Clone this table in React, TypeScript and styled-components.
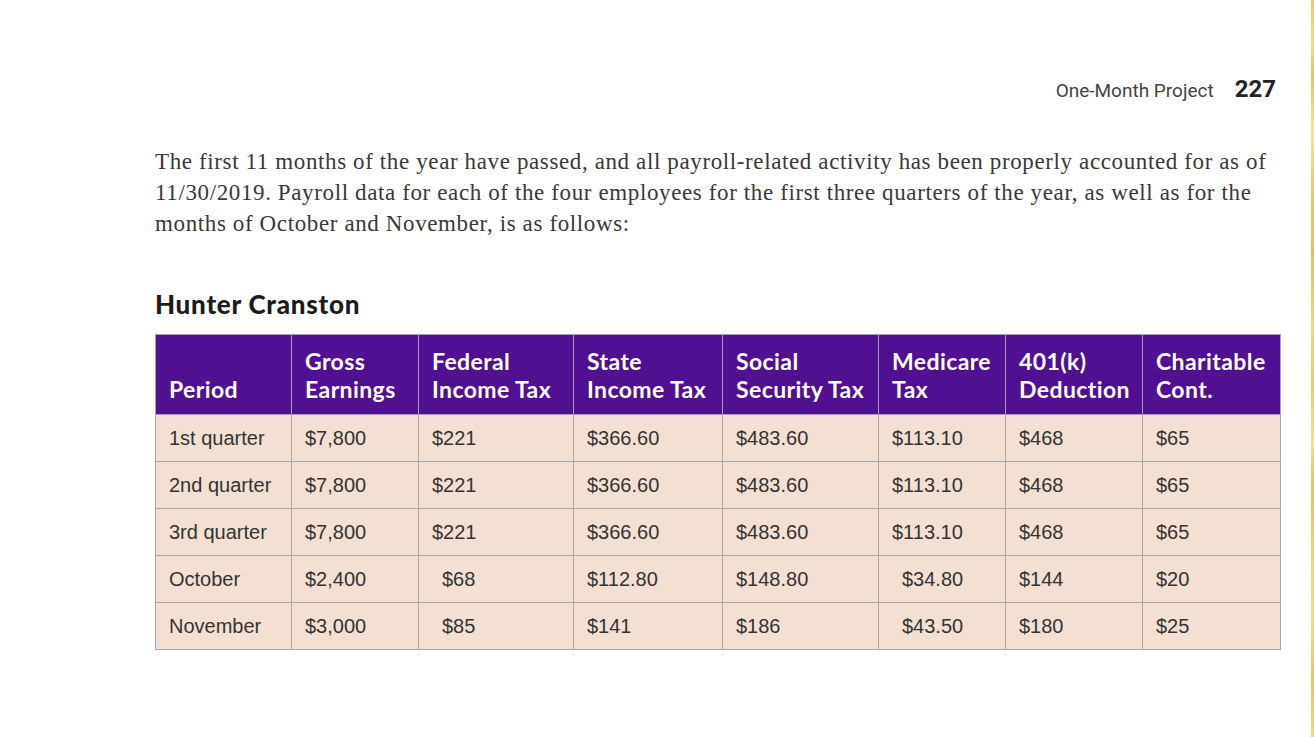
import styled, { createGlobalStyle } from "styled-components";

type Row = {
  period: string;
  values: string[];
  indent?: number[];
};

const columns = [
  { label: ["", "Period"], width: 136 },
  { label: ["Gross", "Earnings"], width: 127 },
  { label: ["Federal", "Income Tax"], width: 155 },
  { label: ["State", "Income Tax"], width: 149 },
  { label: ["Social", "Security Tax"], width: 156 },
  { label: ["Medicare", "Tax"], width: 127 },
  { label: ["401(k)", "Deduction"], width: 137 },
  { label: ["Charitable", "Cont."], width: 138 },
];

const rows: Row[] = [
  { period: "1st quarter", values: ["$7,800", "$221", "$366.60", "$483.60", "$113.10", "$468", "$65"] },
  { period: "2nd quarter", values: ["$7,800", "$221", "$366.60", "$483.60", "$113.10", "$468", "$65"] },
  { period: "3rd quarter", values: ["$7,800", "$221", "$366.60", "$483.60", "$113.10", "$468", "$65"] },
  { period: "October", values: ["$2,400", "$68", "$112.80", "$148.80", "$34.80", "$144", "$20"], indent: [1, 4] },
  { period: "November", values: ["$3,000", "$85", "$141", "$186", "$43.50", "$180", "$25"], indent: [1, 4] },
];

const GlobalStyle = createGlobalStyle`
  html, body {
    margin: 0;
    padding: 0;
    background: #ffffff;
  }
`;

const Page = styled.div`
  display: flex;
  min-height: 737px;
  background: #ffffff;
`;

const Main = styled.main`
  flex: 1;
  padding: 75px 30px 0 155px;
`;

const EdgeStrip = styled.div`
  width: 4px;
  background: linear-gradient(
    180deg,
    #f4cf3e 0%,
    #f8dc6c 6%,
    #f1c82e 10%,
    #fae28a 18%,
    #f3cd3c 26%,
    #eec232 34%,
    #f7d95e 44%,
    #f3cf44 52%,
    #f9e07c 60%,
    #efc534 66%,
    #f5d550 74%,
    #f8dc70 84%,
    #f1ca3a 92%,
    #f7d862 100%
  );
`;

const RunningHead = styled.div`
  display: flex;
  justify-content: flex-end;
  align-items: baseline;
  gap: 21px;
  padding-right: 5px;
  font-family: Roboto, "Liberation Sans", sans-serif;
`;

const HeadTitle = styled.span`
  font-size: 19px;
  color: #444444;
`;

const PageNumber = styled.span`
  font-size: 24px;
  font-weight: 700;
  color: #222222;
`;

const Intro = styled.p`
  margin: 43px 0 0;
  font-family: "Liberation Serif", serif;
  font-size: 23px;
  letter-spacing: 0.62px;
  line-height: 31px;
  color: #3a3836;
  white-space: nowrap;
`;

const Heading = styled.h2`
  margin: 50px 0 0;
  font-family: Lato, "Liberation Sans", sans-serif;
  font-weight: 900;
  font-size: 26px;
  letter-spacing: 0.75px;
  line-height: 30px;
  color: #1c1c1c;
`;

const Table = styled.table`
  margin-top: 15px;
  width: 1125px;
  border-collapse: collapse;
  table-layout: fixed;
  border: 1px solid #a8a8a8;
`;

const HeadCell = styled.th`
  height: 68px;
  padding: 0 6px 11px 13px;
  vertical-align: bottom;
  text-align: left;
  background: #510f92;
  border: 1px solid #a79cbd;
  font-family: Lato, "Liberation Sans", sans-serif;
  font-weight: 700;
  font-size: 23px;
  letter-spacing: 0.4px;
  line-height: 28px;
  color: #ffffff;
  white-space: nowrap;
`;

const Cell = styled.td<{ $indent?: boolean }>`
  height: 46px;
  padding: 0 6px 0 ${(p) => (p.$indent ? 23 : 13)}px;
  background: #f4e0d2;
  border: 1px solid #a8a8a8;
  font-family: "Liberation Sans", Arial, sans-serif;
  font-size: 20px;
  color: #333333;
  white-space: nowrap;
`;

export default function App() {
  return (
    <Page>
      <GlobalStyle />
      <Main>
        <RunningHead>
          <HeadTitle>One-Month Project</HeadTitle>
          <PageNumber>227</PageNumber>
        </RunningHead>
        <Intro>
          The first 11 months of the year have passed, and all payroll-related activity has been properly accounted for as of
          <br />
          11/30/2019. Payroll data for each of the four employees for the first three quarters of the year, as well as for the
          <br />
          months of October and November, is as follows:
        </Intro>
        <Heading>Hunter Cranston</Heading>
        <Table>
          <colgroup>
            {columns.map((c, i) => (
              <col key={i} style={{ width: c.width }} />
            ))}
          </colgroup>
          <thead>
            <tr>
              {columns.map((c, i) => (
                <HeadCell key={i}>
                  {c.label[0] && (
                    <>
                      {c.label[0]}
                      <br />
                    </>
                  )}
                  {c.label[1]}
                </HeadCell>
              ))}
            </tr>
          </thead>
          <tbody>
            {rows.map((r) => (
              <tr key={r.period}>
                <Cell>{r.period}</Cell>
                {r.values.map((v, i) => (
                  <Cell key={i} $indent={r.indent?.includes(i)}>
                    {v}
                  </Cell>
                ))}
              </tr>
            ))}
          </tbody>
        </Table>
      </Main>
      <EdgeStrip />
    </Page>
  );
}
